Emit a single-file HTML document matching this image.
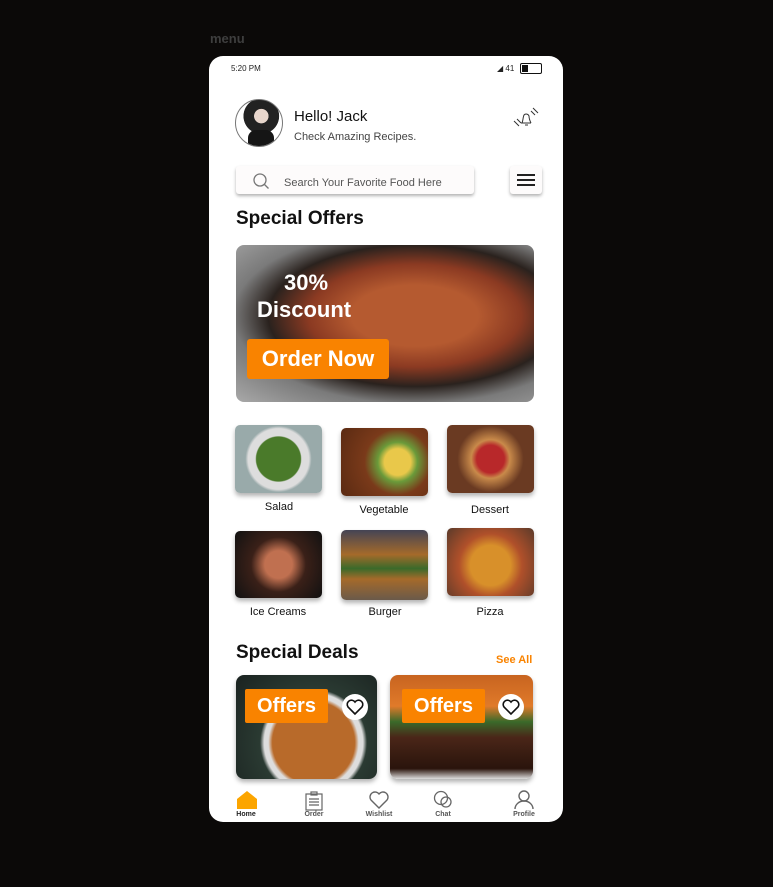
<!DOCTYPE html><html><head><style>
body{margin:0;width:773px;height:887px;background:#0b0908;font-family:"Liberation Sans",sans-serif;position:relative;overflow:hidden}
.a{position:absolute}
.ph{left:209px;top:56px;width:354px;height:766px;background:#fff;border-radius:14px;overflow:hidden}
.img{position:absolute;border-radius:5px;box-shadow:0 3px 5px rgba(0,0,0,.3)}
.lb{position:absolute;font-size:11px;color:#111;text-align:center;width:100px}
.nav{position:absolute;top:811px;font-size:7px;font-weight:bold;color:#555;text-align:center;width:40px}
</style></head><body>
<div class="a" style="left:210px;top:31px;color:#3e3e3e;font-size:13px;font-weight:bold">menu</div>
<div class="a ph"></div>
<div class="a" style="left:231px;top:64px;font-size:8px;color:#222">5:20 PM</div>
<div class="a" style="left:497px;top:64px;font-size:8px;color:#222">◢ 41</div>
<div class="a" style="left:520px;top:63px;width:20px;height:9px;border:1.5px solid #111;border-radius:2px"><div style="width:6px;height:7px;margin:1px;background:#111"></div></div>
<div class="a" style="left:235px;top:99px;width:46px;height:46px;border-radius:50%;border:1px solid #777;background:radial-gradient(circle at 55% 35%,#e8d6cc 0 18%,#222 19% 45%,#fff 46%);overflow:hidden"><div style="position:absolute;left:12px;top:30px;width:26px;height:20px;background:#151515;border-radius:8px 8px 0 0"></div></div>
<div class="a" style="left:294px;top:108px;font-size:15px;color:#111">Hello! Jack</div>
<div class="a" style="left:294px;top:131px;font-size:11px;color:#444">Check Amazing Recipes.</div>
<svg class="a" style="left:510px;top:105px" width="30" height="26" viewBox="0 0 30 26" fill="none" stroke="#333" stroke-width="1"><path d="M11 18h10M12 18c1-2 1-6 2-8a3 3 0 0 1 5 1c0 2 1 5 2 7M15 20h3M7 14l4 4M4 16l5 5M21 6l4 4M23 3l5 5"/></svg>
<div class="a" style="left:236px;top:166px;width:238px;height:28px;border-radius:3px;background:#fdfbfb;box-shadow:0 2px 3px rgba(0,0,0,.3)"></div>
<svg class="a" style="left:252px;top:172px" width="18" height="18" fill="none" stroke="#777" stroke-width="1.3"><circle cx="8" cy="8" r="6"/><path d="M12.5 12.5l4 4"/></svg>
<div class="a" style="left:284px;top:177px;font-size:11px;color:#555">Search Your Favorite Food Here</div>
<div class="a" style="left:510px;top:166px;width:32px;height:28px;border-radius:3px;background:#fdfbfb;box-shadow:0 2px 3px rgba(0,0,0,.3)"><div style="margin:8px 7px;height:1.5px;background:#222;box-shadow:0 5px #222,0 10px #222"></div></div>
<div class="a" style="left:236px;top:208px;font-size:19px;font-weight:bold;color:#111">Special Offers</div>
<div class="a" style="left:236px;top:245px;width:298px;height:157px;border-radius:8px;overflow:hidden;background:radial-gradient(ellipse at 60% 45%,#b55a30 0 25%,#8b3a22 42%,#2a221e 58%,#7a7a7a 72%,#a9a9a9)"></div>
<div class="a" style="left:284px;top:270px;font-size:22px;font-weight:bold;color:#fff">30%</div>
<div class="a" style="left:257px;top:297px;font-size:22px;font-weight:bold;color:#fff">Discount</div>
<div class="a" style="left:247px;top:339px;width:142px;height:40px;background:#f98300;border-radius:3px;color:#fff;font-weight:bold;font-size:22px;line-height:40px;text-align:center">Order Now</div>
<div class="img" style="left:235px;top:425px;width:87px;height:68px;background:radial-gradient(circle,#4a7a2a 0 40%,#ddd 42% 55%,#9aa 60%)"></div>
<div class="img" style="left:341px;top:428px;width:87px;height:68px;background:radial-gradient(circle at 65% 50%,#e9c84a 0 20%,#6a9a3a 30%,#7a3a1a 50%,#5a2a12)"></div>
<div class="img" style="left:447px;top:425px;width:87px;height:68px;background:radial-gradient(circle at 50% 50%,#b8282a 0 25%,#c98a4a 35%,#6a3a22 60%)"></div>
<div class="lb" style="left:229px;top:501px">Salad</div>
<div class="lb" style="left:334px;top:504px">Vegetable</div>
<div class="lb" style="left:440px;top:504px">Dessert</div>
<div class="img" style="left:235px;top:531px;width:87px;height:67px;background:radial-gradient(circle at 50% 50%,#c07050 0 25%,#3a2018 50%,#111)"></div>
<div class="img" style="left:341px;top:530px;width:87px;height:70px;background:linear-gradient(#445 0,#a56a2a 35%,#3a6a2a 55%,#a56a2a 70%,#6a5a4a)"></div>
<div class="img" style="left:447px;top:528px;width:87px;height:68px;background:radial-gradient(circle at 50% 55%,#d8902a 0 35%,#b0502a 55%,#5a3a2a)"></div>
<div class="lb" style="left:228px;top:606px">Ice Creams</div>
<div class="lb" style="left:335px;top:606px">Burger</div>
<div class="lb" style="left:440px;top:606px">Pizza</div>
<div class="a" style="left:236px;top:642px;font-size:19px;font-weight:bold;color:#111">Special Deals</div>
<div class="a" style="left:496px;top:654px;font-size:11px;font-weight:bold;color:#f98300">See All</div>
<div class="img" style="left:236px;top:675px;width:141px;height:104px;border-radius:8px;background:radial-gradient(circle at 55% 65%,#b86a2a 0 40%,#ddd 44% 48%,#2a3a32 52%,#1a2220)"></div>
<div class="img" style="left:390px;top:675px;width:143px;height:104px;border-radius:8px;background:linear-gradient(#c86420 0,#e07a2a 30%,#3a6a2a 45%,#4a2618 60%,#2a140c 90%,#ddd)"></div>
<div class="a" style="left:245px;top:689px;width:83px;height:34px;background:#f98300;border-radius:2px;color:#fff;font-weight:bold;font-size:20px;line-height:34px;text-align:center">Offers</div>
<div class="a" style="left:402px;top:689px;width:83px;height:34px;background:#f98300;border-radius:2px;color:#fff;font-weight:bold;font-size:20px;line-height:34px;text-align:center">Offers</div>
<svg class="a" style="left:342px;top:694px" width="26" height="26"><circle cx="13" cy="13" r="13" fill="#fff"/><path d="M13 20l-7-7a4 4 0 0 1 7-5a4 4 0 0 1 7 5z" fill="none" stroke="#111" stroke-width="1.6"/></svg>
<svg class="a" style="left:498px;top:694px" width="26" height="26"><circle cx="13" cy="13" r="13" fill="#fff"/><path d="M13 20l-7-7a4 4 0 0 1 7-5a4 4 0 0 1 7 5z" fill="none" stroke="#111" stroke-width="1.6"/></svg>
<svg class="a" style="left:236px;top:790px" width="22" height="19"><path d="M1 9l10-8 10 8v10H1z" fill="#fca500"/></svg>
<svg class="a" style="left:304px;top:791px" width="20" height="20" fill="none" stroke="#666" stroke-width="1.2"><rect x="2" y="3" width="16" height="16"/><rect x="7" y="1" width="6" height="3"/><path d="M5 8h10M5 11h10M5 14h10"/></svg>
<svg class="a" style="left:368px;top:790px" width="22" height="20" fill="none" stroke="#666" stroke-width="1.4"><path d="M11 18l-8-8a5 5 0 0 1 8-6a5 5 0 0 1 8 6z"/></svg>
<svg class="a" style="left:432px;top:790px" width="22" height="20" fill="none" stroke="#666" stroke-width="1.3"><circle cx="9" cy="8" r="6.5"/><circle cx="14" cy="12" r="5"/></svg>
<svg class="a" style="left:513px;top:789px" width="22" height="21" fill="none" stroke="#666" stroke-width="1.4"><circle cx="11" cy="7" r="5"/><path d="M2 20a9 8 0 0 1 18 0"/></svg>
<div class="nav" style="left:226px;color:#222">Home</div>
<div class="nav" style="left:294px">Order</div>
<div class="nav" style="left:359px">Wishlist</div>
<div class="nav" style="left:423px">Chat</div>
<div class="nav" style="left:504px">Profile</div>
</body></html>
